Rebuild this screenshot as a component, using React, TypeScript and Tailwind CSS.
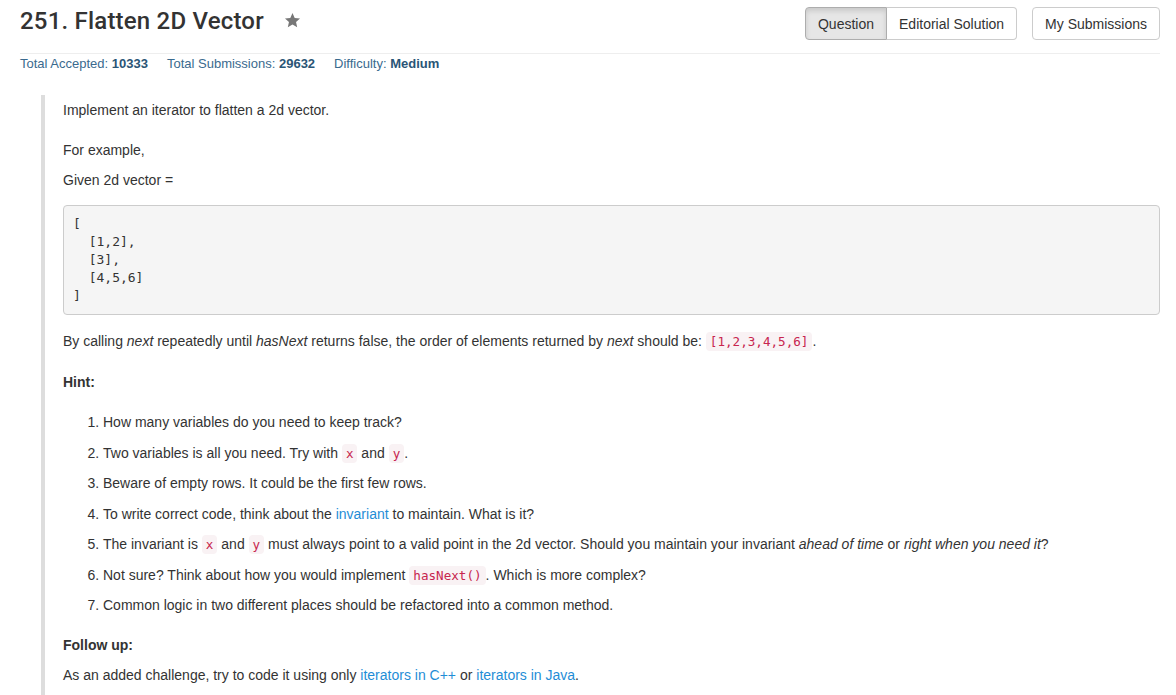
import React from "react";

const Code = ({ children }: { children: React.ReactNode }) => (
  <code className="font-['DejaVu_Sans_Mono',monospace] text-[12.6px] leading-none text-[#c7254e] bg-[#f9f2f4] px-1 py-0.5 rounded">
    {children}
  </code>
);

const A = ({ children }: { children: React.ReactNode }) => (
  <a href="#" className="text-[#1f8dd6] no-underline">
    {children}
  </a>
);

const Star = () => (
  <svg width="17" height="17" viewBox="0 0 24 24" className="fill-[#777]">
    <polygon points="12,1.5 15.1,8.4 22.6,9.2 17,14.2 18.6,21.6 12,17.8 5.4,21.6 7,14.2 1.4,9.2 8.9,8.4" />
  </svg>
);

const hints: React.ReactNode[] = [
  <>How many variables do you need to keep track?</>,
  <>
    Two variables is all you need. Try with <Code>x</Code> and <Code>y</Code>.
  </>,
  <>Beware of empty rows. It could be the first few rows.</>,
  <>
    To write correct code, think about the <A>invariant</A> to maintain. What is it?
  </>,
  <>
    The invariant is <Code>x</Code> and <Code>y</Code> must always point to a valid point in the 2d
    vector. Should you maintain your invariant <em>ahead of time</em> or <em>right when you need it</em>?
  </>,
  <>
    Not sure? Think about how you would implement <Code>hasNext()</Code>. Which is more complex?
  </>,
  <>Common logic in two different places should be refactored into a common method.</>,
];

export default function App() {
  return (
    <div className="min-h-[695px] bg-white pl-5 pr-4 font-['Liberation_Sans',Arial,sans-serif] text-[14px] text-[#333]">
      {/* header */}
      <div className="h-[54px] flex justify-between border-b border-[#eee]">
        <div className="flex items-start">
          <h3 className="mt-2 font-['Roboto',sans-serif] text-[24px] leading-[26px] font-medium tracking-[0.2px] text-[#333]">
            251. Flatten 2D Vector
          </h3>
          <span className="ml-[20px] mt-[12px]">
            <Star />
          </span>
        </div>
        <div className="flex items-start gap-[15px] pt-[7px]">
          <div className="flex">
            <button className="h-[33px] px-3 pt-px border border-[#adadad] bg-[#e6e6e6] rounded-l shadow-[inset_0_3px_5px_rgba(0,0,0,0.125)] text-[#333]">
              Question
            </button>
            <button className="h-[33px] px-3 pt-px border border-l-0 border-[#ccc] bg-white rounded-r text-[#333]">
              Editorial Solution
            </button>
          </div>
          <button className="h-[33px] px-3 pt-px border border-[#ccc] bg-white rounded text-[#333]">
            My Submissions
          </button>
        </div>
      </div>

      {/* stats */}
      <div className="flex gap-[19px] pt-px text-[13px] leading-[18px] text-[#3a6a8e]">
        <span>
          Total Accepted: <b className="text-[#2a5576]">10333</b>
        </span>
        <span>
          Total Submissions: <b className="text-[#2a5576]">29632</b>
        </span>
        <span>
          Difficulty: <b className="text-[#2a5576]">Medium</b>
        </span>
      </div>

      {/* description */}
      <div className="mt-[22px] ml-[21px] border-l-4 border-[#ddd] pl-[18px] pt-[5px] pb-[10px] leading-5">
        <p className="mb-5">Implement an iterator to flatten a 2d vector.</p>
        <p className="mb-[10px]">For example,</p>
        <p className="mb-[15px]">Given 2d vector =</p>
        <pre className="mb-4 h-[110px] p-[9px] bg-[#f5f5f5] border border-[#ccc] rounded font-['DejaVu_Sans_Mono',monospace] text-[13px] leading-[18px] text-[#333]">
{`[
  [1,2],
  [3],
  [4,5,6]
]`}
        </pre>
        <p className="mb-[21px]">
          By calling <em>next</em> repeatedly until <em>hasNext</em> returns false, the order of elements
          returned by <em>next</em> should be: <Code>[1,2,3,4,5,6]</Code>.
        </p>
        <p className="mb-5 font-bold">Hint:</p>
        <ol className="mb-5 list-decimal pl-10">
          {hints.map((h, i) => (
            <li key={i} className={i < hints.length - 1 ? "mb-[10.5px]" : ""}>
              {h}
            </li>
          ))}
        </ol>
        <p className="mb-[10px] font-bold">Follow up:</p>
        <p>
          As an added challenge, try to code it using only <A>iterators in C++</A> or{" "}
          <A>iterators in Java</A>.
        </p>
      </div>
    </div>
  );
}
